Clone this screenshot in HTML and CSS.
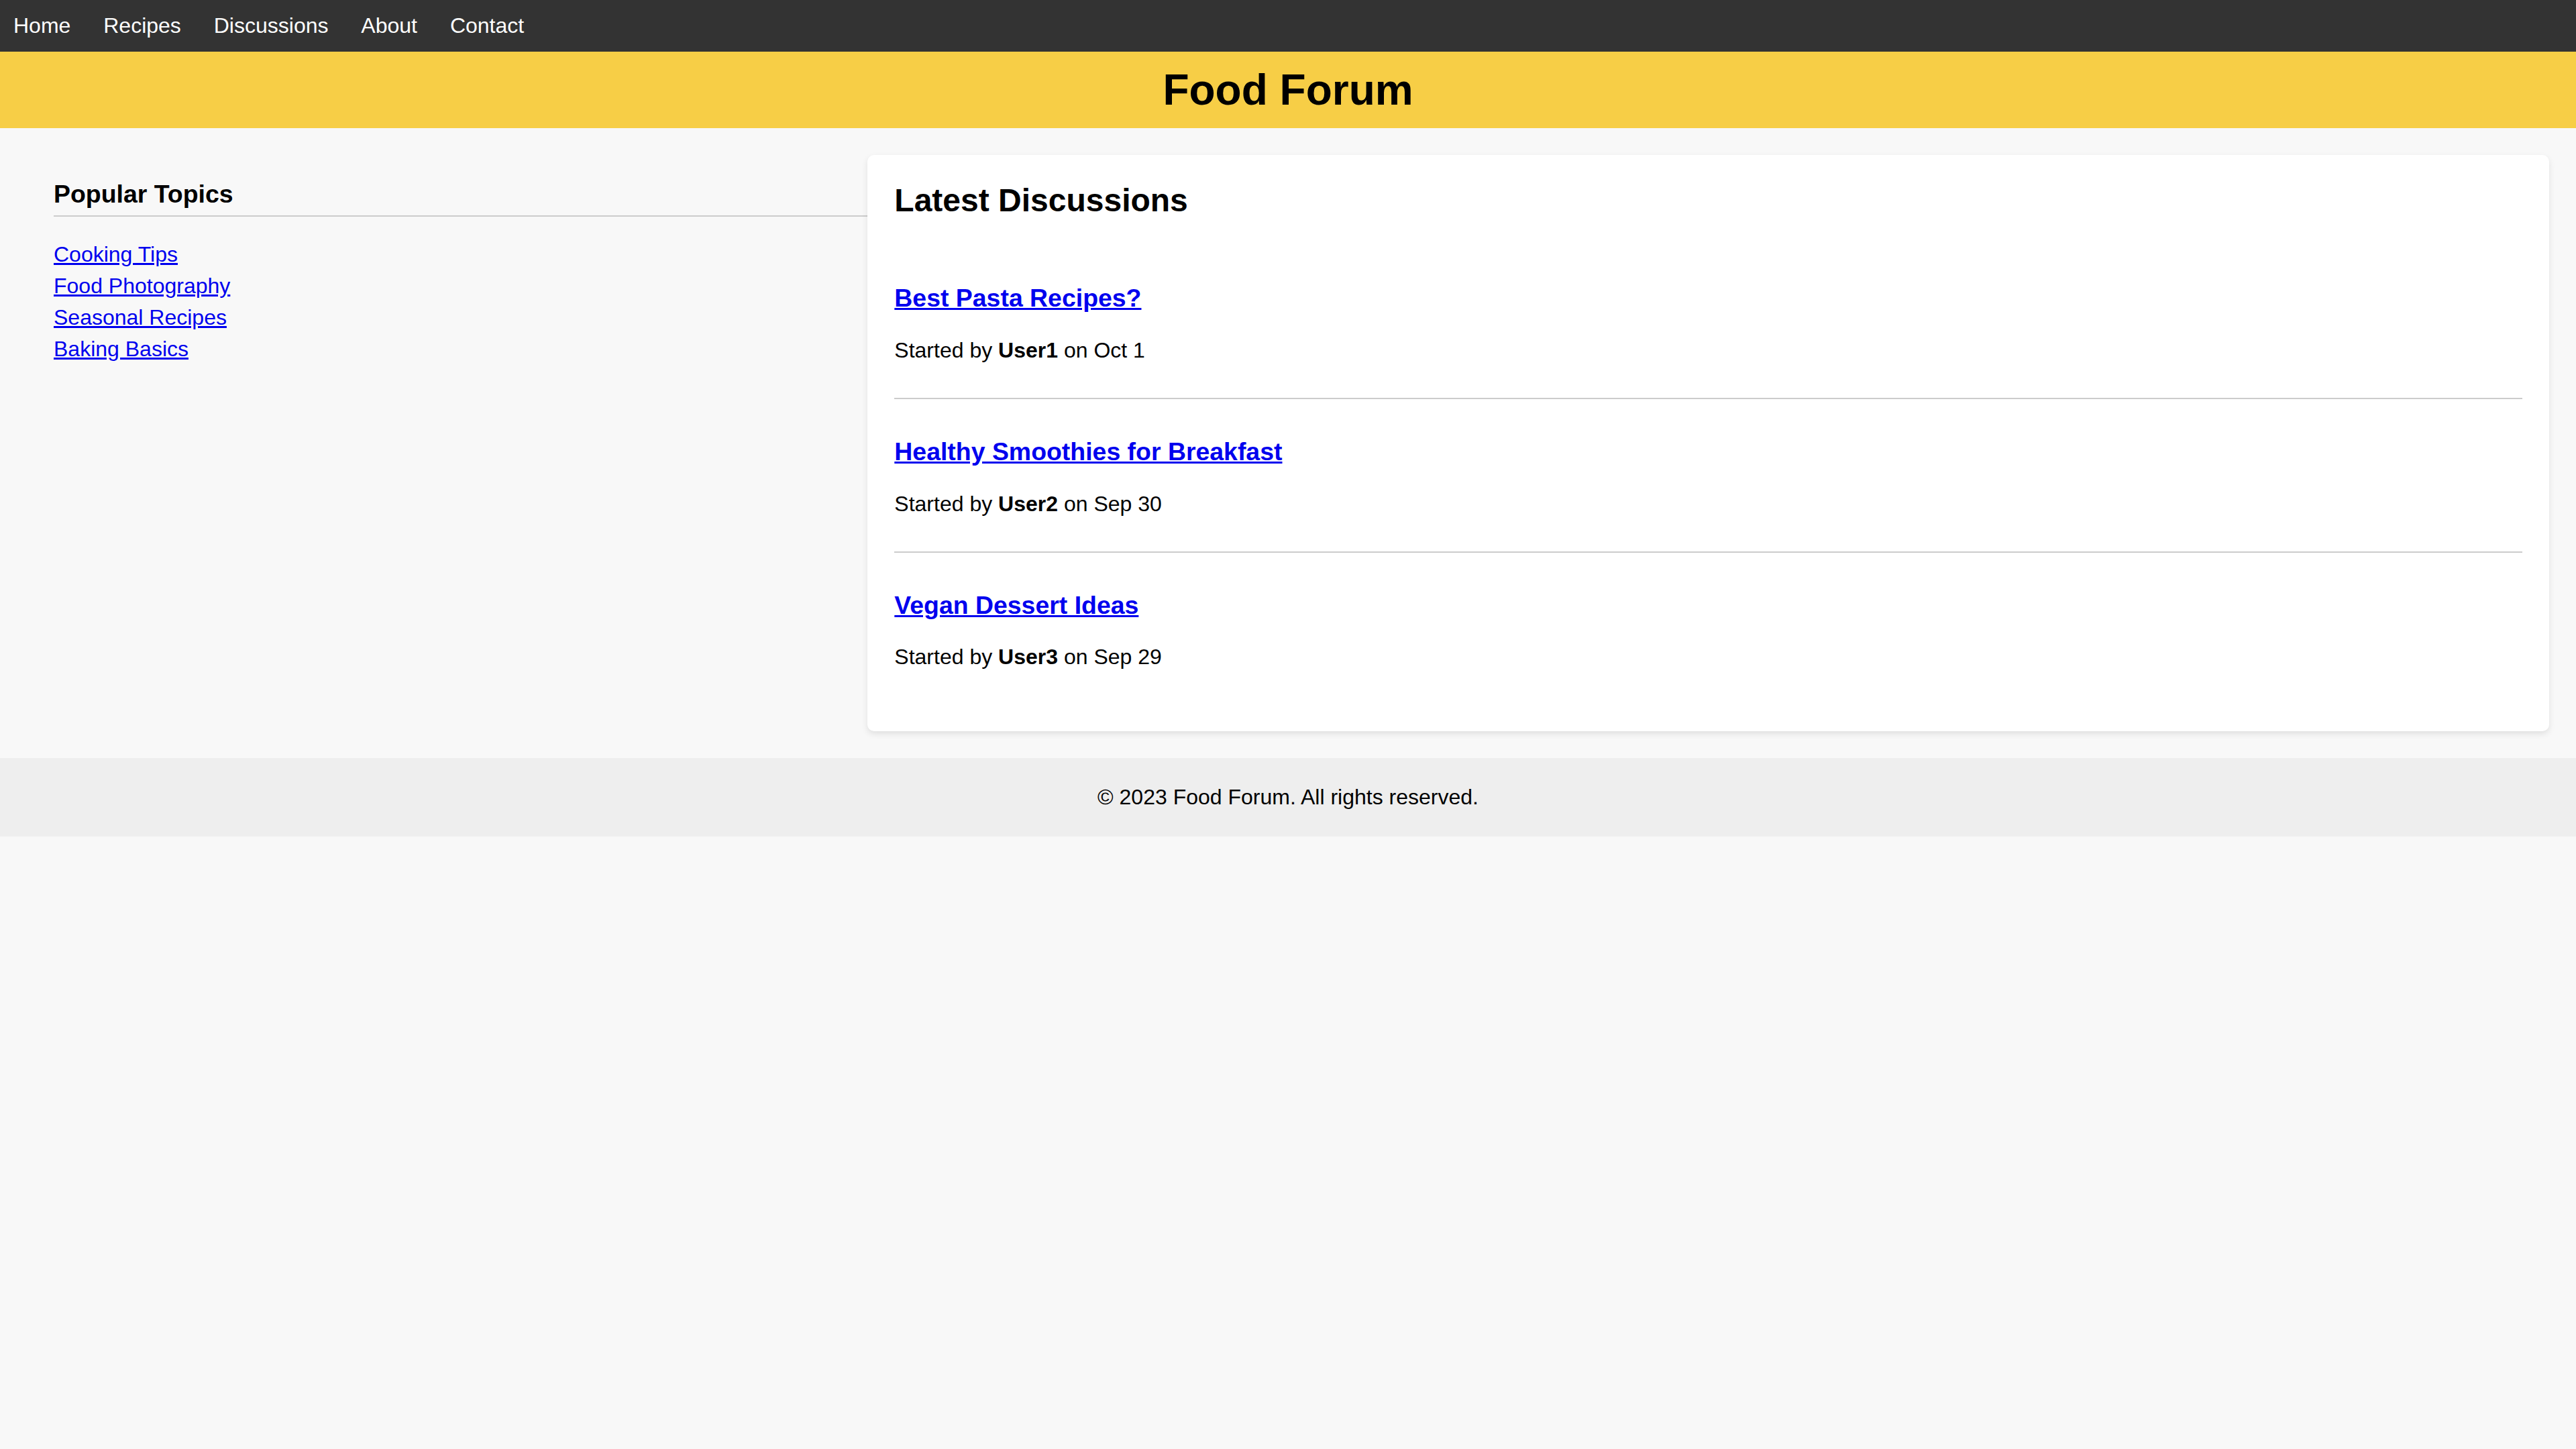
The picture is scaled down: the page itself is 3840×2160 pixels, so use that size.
FILE: index.html
```html
<!DOCTYPE html>
<html lang="en">
<head>
<meta charset="utf-8">
<title>Food Forum</title>
<link rel="stylesheet" href="styles.css">
</head>
<body>
<nav class="topnav">
  <a href="#">Home</a>
  <a href="#">Recipes</a>
  <a href="#">Discussions</a>
  <a href="#">About</a>
  <a href="#">Contact</a>
</nav>
<header class="banner">
  <h1 class="banner-title">Food Forum</h1>
</header>
<main class="layout">
  <aside class="sidebar">
    <h3 class="sidebar-title">Popular Topics</h3>
    <ul class="topic-list">
      <li><a href="#">Cooking Tips</a></li>
      <li><a href="#">Food Photography</a></li>
      <li><a href="#">Seasonal Recipes</a></li>
      <li><a href="#">Baking Basics</a></li>
    </ul>
  </aside>
  <section class="card">
    <h2 class="card-title">Latest Discussions</h2>
    <div class="thread">
      <h3 class="thread-title"><a href="#">Best Pasta Recipes?</a></h3>
      <p class="thread-meta">Started by <strong>User1</strong> on Oct 1</p>
    </div>
    <div class="thread">
      <h3 class="thread-title"><a href="#">Healthy Smoothies for Breakfast</a></h3>
      <p class="thread-meta">Started by <strong>User2</strong> on Sep 30</p>
    </div>
    <div class="thread">
      <h3 class="thread-title"><a href="#">Vegan Dessert Ideas</a></h3>
      <p class="thread-meta">Started by <strong>User3</strong> on Sep 29</p>
    </div>
  </section>
</main>
<footer class="site-footer">
  <p>&copy; 2023 Food Forum. All rights reserved.</p>
</footer>
</body>
</html>
```
FILE: styles.css
```css
html, body {
  margin: 0;
  padding: 0;
}

body {
  font-family: "Liberation Sans", Arial, sans-serif;
  background: #f8f8f8;
  color: #000;
  font-size: 32px;
}

.topnav {
  background: #333;
  padding: 20px 0;
  font-size: 32px;
}

.topnav a {
  color: #fff;
  text-decoration: none;
  padding: 0 20px;
}

.banner {
  background: #f7ce46;
  padding: 20px;
  text-align: center;
}

.banner-title {
  margin: 0;
  font-size: 64px;
}

.layout {
  display: flex;
  align-items: flex-start;
  padding: 40px;
}

.sidebar {
  flex: 1;
  padding-left: 40px;
}

.sidebar-title {
  font-size: 37.44px;
  margin: 37.44px 0;
  padding-bottom: 10px;
  border-bottom: 2px solid #ccc;
}

.topic-list {
  list-style: none;
  margin: 0;
  padding: 0;
}

.topic-list li {
  margin-bottom: 10px;
}

.topic-list a,
.thread-title a {
  color: #0000ee;
}

.card {
  flex: 2;
  background: #fff;
  padding: 40px;
  border-radius: 10px;
  box-shadow: 0 4px 10px rgba(0, 0, 0, 0.1);
}

.card-title {
  margin: 0 0 39.84px;
  font-size: 48px;
}

.thread {
  padding: 20px 0;
  border-bottom: 2px solid #ccc;
}

.thread:last-child {
  border-bottom: none;
}

.thread-title {
  font-size: 37.44px;
  margin: 37.44px 0;
}

.thread-meta {
  margin: 32px 0;
}

.site-footer {
  background: #eee;
  text-align: center;
  padding: 40px;
}

.site-footer p {
  margin: 0;
}
```
